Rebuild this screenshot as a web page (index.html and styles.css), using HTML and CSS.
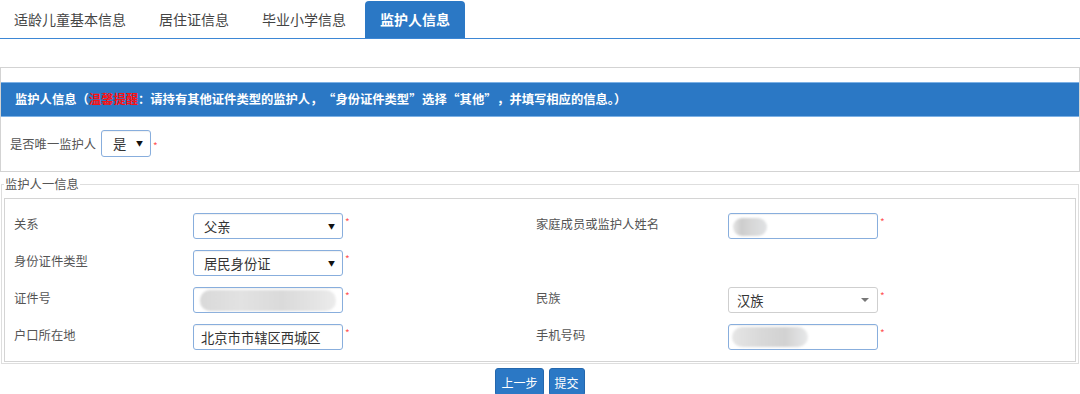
FILE: index.html
```html
<!DOCTYPE html>
<html lang="zh-CN">
<head>
    <meta charset="UTF-8">
    <meta name="viewport" content="width=device-width, initial-scale=1.0">
    <title>监护人信息</title>
    <link rel="stylesheet" href="styles.css">
</head>
<body>
    <div class="tabs">
        <div class="tab">适龄儿童基本信息</div>
        <div class="tab">居住证信息</div>
        <div class="tab">毕业小学信息</div>
        <div class="tab active">监护人信息</div>
    </div>

    <div class="panel">
        <div class="panel-head">监护人信息（<span class="warn">温馨提醒</span>：请持有其他证件类型的监护人，<span class="ql">“</span>身份证件类型<span class="qr">”</span>选择<span class="ql">“</span>其他<span class="qr">”</span>，并填写相应的信息。）</div>
        <div class="only-row">
            <span class="only-label">是否唯一监护人</span>
            <span class="sel"><select class="ctl ctl-small"><option>是</option><option>否</option></select></span>
            <span class="req">*</span>
        </div>
    </div>

    <fieldset class="group">
        <legend>监护人一信息</legend>
        <div class="grid">
            <div class="label">关系</div>
            <div class="field">
                <span class="sel"><select class="ctl"><option>父亲</option></select></span>
                <span class="req">*</span>
            </div>
            <div class="label">家庭成员或监护人姓名</div>
            <div class="field">
                <span class="masked"><input class="ctl" type="text"><span class="blob blob-name"></span></span>
                <span class="req">*</span>
            </div>

            <div class="label">身份证件类型</div>
            <div class="field">
                <span class="sel"><select class="ctl"><option>居民身份证</option></select></span>
                <span class="req">*</span>
            </div>
            <div></div>
            <div></div>

            <div class="label">证件号</div>
            <div class="field">
                <span class="masked"><input class="ctl" type="text"><span class="blob blob-id"></span></span>
                <span class="req">*</span>
            </div>
            <div class="label">民族</div>
            <div class="field">
                <span class="sel sel-plain"><select class="ctl ctl-gray"><option>汉族</option></select></span>
                <span class="req">*</span>
            </div>

            <div class="label">户口所在地</div>
            <div class="field">
                <input class="ctl ctl-text" type="text" value="北京市市辖区西城区">
                <span class="req">*</span>
            </div>
            <div class="label">手机号码</div>
            <div class="field">
                <span class="masked"><input class="ctl" type="text"><span class="blob blob-phone"></span></span>
                <span class="req">*</span>
            </div>
        </div>
    </fieldset>

    <div class="actions">
        <button class="btn">上一步</button>
        <button class="btn">提交</button>
    </div>
</body>
</html>
```

FILE: styles.css
```css
body {
    margin: 0;
    font-family: "Noto Sans CJK SC", "Liberation Sans", sans-serif;
    font-size: 12.3px;
    color: #555;
    background: #fff;
}
.tabs {
    display: flex;
    gap: 5px;
    height: 38px;
    border-bottom: 1px solid #3d87d5;
}
.tab {
    padding: 0 14px;
    line-height: 38px;
    font-size: 14px;
    color: #444;
}
.tab.active {
    margin-top: 1px;
    padding: 0 15px;
    line-height: 37px;
    background: #2b78c5;
    color: #fff;
    font-weight: bold;
    border-radius: 4px 4px 0 0;
}
.panel {
    margin-top: 28px;
    border: 1px solid #d3d3d3;
    padding: 14px 0 14px;
}
.panel-head {
    height: 33px;
    line-height: 33px;
    padding-left: 14px;
    background: #2b78c5;
    border-top: 1px solid #7db1e5;
    border-bottom: 1px solid #7db1e5;
    color: #fff;
    font-weight: bold;
    white-space: nowrap;
}
/* 全角引号 */
.ql, .qr {
    display: inline-block;
    width: 1.05em;
}
.ql {
    text-align: right;
}
.qr {
    text-align: left;
}
.warn {
    color: #ff1010;
}
.only-row {
    display: flex;
    align-items: center;
    margin-top: 13px;
    padding-left: 9px;
}
.only-label {
    margin-right: 5px;
}
.group {
    margin: 4px 1px 0;
    padding: 0 2px 1px;
    border: 1px solid #dedede;
    min-width: 0;
}
.group legend {
    padding: 0 1px;
    line-height: 16px;
    color: #555;
}
.grid {
    margin-top: 6px;
    display: grid;
    grid-template-columns: 179px 343px 192px 1fr;
    row-gap: 11px;
    padding: 14px 0 11px 9px;
    border: 1px solid #d4d4d4;
}
.label {
    line-height: 16px;
    padding-top: 3px;
    color: #555;
}
.field {
    display: flex;
    align-items: flex-start;
}
.ctl {
    width: 150px;
    height: 26px;
    box-sizing: border-box;
    margin: 0;
    padding: 0 10px;
    border: 1px solid #88aedd;
    border-radius: 3px;
    background: #fff;
    font-family: inherit;
    font-size: 13.3px;
    color: #333;
    box-shadow: inset 0 1px 1px rgba(0, 0, 0, 0.06);
    outline: none;
    -webkit-appearance: none;
    appearance: none;
}
.ctl-small {
    width: 50px;
    height: 27px;
    padding-left: 11px;
}
.ctl-text {
    padding-left: 7px;
}
.ctl-gray {
    border-color: #cfcfcf;
    padding-left: 8px;
    box-shadow: none;
}
.sel {
    position: relative;
    display: inline-block;
}
.sel::after {
    content: "▼";
    position: absolute;
    right: 8px;
    top: 9px;
    font-size: 7px;
    line-height: 9px;
    color: #111;
    pointer-events: none;
}
.sel-plain::after {
    content: "";
    right: 9px;
    top: 11px;
    border-left: 4px solid transparent;
    border-right: 4px solid transparent;
    border-top: 4px solid #777;
}
.masked {
    position: relative;
    display: inline-block;
}
.blob {
    position: absolute;
    border-radius: 10px;
    filter: blur(1px);
    pointer-events: none;
}
.blob-name {
    left: 5px;
    top: 5px;
    width: 34px;
    height: 18px;
    background: linear-gradient(90deg, #e4e4e4 0, #cdcdcd 25%, #d6d6d6 50%, #e0e2e4 100%);
}
.blob-id {
    left: 7px;
    top: 3px;
    width: 136px;
    height: 21px;
    background: linear-gradient(90deg, #d9d9d9 0, #e2e2e2 30%, #dadada 60%, #e4e4e4 85%, #ececec 100%);
}
.blob-phone {
    left: 4px;
    top: 3px;
    width: 76px;
    height: 20px;
    background: linear-gradient(90deg, #e6e6e6 0, #d8d8d8 40%, #d2d2d2 70%, #e8e9ea 100%);
}
.req {
    margin-left: 2px;
    margin-top: 4px;
    font-size: 10px;
    line-height: 10px;
    color: #f55;
}
.actions {
    display: flex;
    justify-content: center;
    gap: 5px;
    margin-top: 4px;
}
.btn {
    height: 28px;
    padding: 0 5px;
    background: #2b78c5;
    border: 1px solid #2467ad;
    border-radius: 3px;
    color: #fff;
    font-family: inherit;
    font-size: 12px;
    cursor: pointer;
}
```
